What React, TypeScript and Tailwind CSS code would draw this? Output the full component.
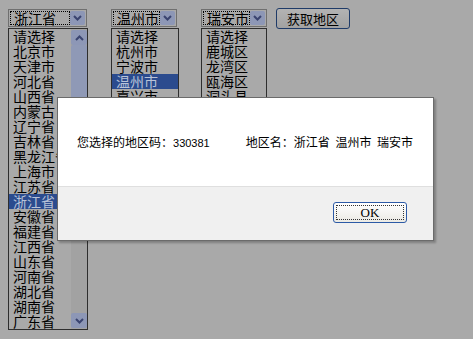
const provinces = ['请选择', '北京市', '天津市', '河北省', '山西省', '内蒙古', '辽宁省', '吉林省', '黑龙江省', '上海市', '江苏省', '浙江省', '安徽省', '福建省', '江西省', '山东省', '河南省', '湖北省', '湖南省', '广东省']
const cities = ['请选择', '杭州市', '宁波市', '温州市', '嘉兴市', '湖州市', '绍兴市', '金华市', '衢州市', '舟山市']
const districts = ['请选择', '鹿城区', '龙湾区', '瓯海区', '洞头县', '永嘉县', '平阳县', '苍南县', '文成县', '泰顺县']

const cjk = "font-['SimSun','Noto_Sans_CJK_SC',sans-serif]"

function Chevron({ up = false }: { up?: boolean }) {
  return (
    <svg width="9" height="6" viewBox="0 0 9 6" className={up ? 'rotate-180' : ''}>
      <path d="M1 1 L4.5 4.5 L8 1" fill="none" stroke="#3a4470" strokeWidth="2" />
    </svg>
  )
}

function Select({ value, width }: { value: string; width: string }) {
  return (
    <div className={`flex h-[18px] ${width} border border-[#6f6f6f] bg-[#a9a9a9] p-px`}>
      <div className="flex flex-1 items-center border border-dotted border-black pl-[3px] text-[14px] leading-[14px] text-black">
        {value}
      </div>
      <div className="flex w-[15px] items-center justify-center rounded-[2px] bg-[#8d97b6]">
        <Chevron />
      </div>
    </div>
  )
}

function ListBox({ items, active, width, height, scroll = false }: { items: string[]; active: number; width: string; height: string; scroll?: boolean }) {
  return (
    <div className={`mt-px flex overflow-hidden border border-[#2e2e2e] bg-[#a9a9a9] ${width} ${height}`}>
      <div className="flex-1">
        {items.map((item, i) => (
          <div
            key={i}
            className={`h-[15px] pl-[4px] text-[14px] leading-[15px] whitespace-nowrap ${i === active ? 'bg-[#2b4b8e] text-[#b8c2d8]' : 'text-black'}`}
          >
            {item}
          </div>
        ))}
      </div>
      {scroll && (
        <div className="flex w-[16px] flex-col bg-[#a2a2a2] py-px">
          <div className="flex h-[15px] items-center justify-center rounded-[2px] bg-[#8d97b6]">
            <Chevron up />
          </div>
          <div className="h-[105px] rounded-[2px] bg-[#8f99b6]" />
          <div className="flex-1" />
          <div className="flex h-[15px] items-center justify-center rounded-[2px] bg-[#8d97b6]">
            <Chevron />
          </div>
        </div>
      )}
    </div>
  )
}

export default function App() {
  return (
    <div className={`relative h-[339px] w-[473px] overflow-hidden bg-[#a9a9a9] ${cjk}`}>
      <div className="flex items-start pl-[8px] pt-[9px]">
        <div className="flex flex-col">
          <Select value="浙江省" width="w-[79px]" />
          <ListBox items={provinces} active={11} width="w-[80px]" height="h-[302px]" scroll />
        </div>

        <div className="ml-[23px] flex flex-col">
          <Select value="温州市" width="w-[66px]" />
          <ListBox items={cities} active={3} width="w-[68px]" height="h-[140px]" />
        </div>

        <div className="ml-[22px] flex flex-col">
          <Select value="瑞安市" width="w-[66px]" />
          <ListBox items={districts} active={-1} width="w-[66px]" height="h-[140px]" />
        </div>

        <button className="-mt-px ml-[9px] h-[21px] w-[74px] rounded-[3px] border border-[#1f3b68] bg-gradient-to-b from-[#b3b3b3] to-[#a2a2a2] text-[13px] leading-[13px] text-black">
          获取地区
        </button>
      </div>

      {/* alert dialog */}
      <div className="absolute left-[57px] top-[97px] flex h-[144px] w-[377px] flex-col border border-[#6b6b6b] bg-white shadow-[2px_2px_2px_rgba(0,0,0,0.25)]">
        <div className="flex h-[88px] items-center pl-[19px] text-[12px] text-black">
          <span>您选择的地区码：<span className="font-['Liberation_Sans',sans-serif] text-[11px]">330381</span></span>
          <span className="ml-[36px] whitespace-pre [word-spacing:3px]">地区名：浙江省 温州市 瑞安市</span>
        </div>
        <div className="flex flex-1 justify-end border-t border-[#dfdfdf] bg-[#f0f0f0] pr-[26px] pt-[15px]">
          <button className="h-[21px] w-[74px] rounded-[3px] border border-[#2c5aa6] bg-gradient-to-b from-[#ffffff] to-[#ebeae4] p-[2px]">
            <div className="flex h-full items-center justify-center border border-dotted border-[#333] font-['Liberation_Serif',serif] text-[13px] leading-[13px] text-black">
              OK
            </div>
          </button>
        </div>
      </div>
    </div>
  )
}
